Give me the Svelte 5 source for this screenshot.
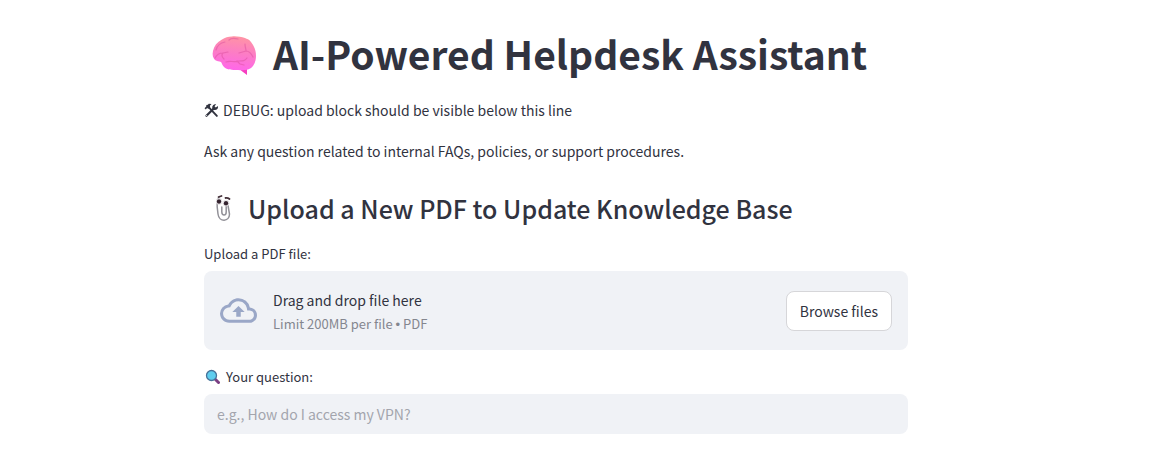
<script>
  let question = $state('');
  let picker;
</script>

<main>
  <h1>
    <svg class="brain" viewBox="0 -4 44 43" aria-hidden="true">
      <defs>
        <linearGradient id="brain-fill" x1="0.6" y1="0" x2="0.45" y2="1">
          <stop offset="0" stop-color="#ff94a4" />
          <stop offset="0.5" stop-color="#fc7cc6" />
          <stop offset="1" stop-color="#ff66ea" />
        </linearGradient>
      </defs>
      <path d="M27 31l6 2 2-1v7l-4-3c-2-1-3-3-4-5z" fill="#f63fc0" />
      <path d="M20 0.500c-4 0-7 1-10 3C5 6 2 10 1 15c-1 4 0 7 2 9 2 1.500 4 1 6 2 1 1 1 3 3 5 3 3 8 3 14 3 7 1 12 0 15-4 2-3 3-6 3-10 0-6-2-10-5-14-2-3-4-3-6-4C29 1 24 0 20 .5z" fill="url(#brain-fill)" />
      <g fill="none" stroke="#dd509f" stroke-width="1.200" stroke-linecap="round" stroke-linejoin="round" opacity="0.5">
        <path d="M4 14c1-4 4-7 9-8M17 4c2-2 5-2 9-1" />
        <path d="M3 22c2-4 5-5 8-5l5-1M11 17c-2 2-1 4 1 6" />
        <path d="M33 8c0 3 1 5 1 7l-7 2M34 15c3 0 5 2 7 6" />
        <path d="M14 26c5-2 8 1 13-1 4 0 6 0 8-3M25 25l3 3 4 1" />
      </g>
    </svg>
    <span>AI-Powered Helpdesk Assistant</span>
  </h1>

  <p>
    <svg class="tools" viewBox="0 0 14 14" aria-hidden="true">
      <path d="M3 2.500l9 9.500" stroke="#31333f" stroke-width="1.800" stroke-linecap="round" />
      <path d="M0.500 5L4.500 0.800 7 1 5.500 2.500 5.800 4 3.800 5.600 3 4.500 1.700 6z" fill="#31333f" />
      <path d="M9.300 5L2.300 12" stroke="#31333f" stroke-width="2" stroke-linecap="round" />
      <path d="M8 5.500c-1-2.500.8-4.700 3.400-4.300L9.800 3l1.200 1.300L13 2.700c.6 2.600-1.500 4.500-4 3.700z" fill="#31333f" />
      <circle cx="2.500" cy="11.700" r="0.500" fill="#fff" />
    </svg>
    <span>DEBUG: upload block should be visible below this line</span>
  </p>
  <p>Ask any question related to internal FAQs, policies, or support procedures.</p>

  <h2>
    <svg class="clip" viewBox="0 0 16 30" aria-hidden="true">
      <path d="M3 4.500C1 7 1 9 1.200 14L2 21c1 8.500 11.500 8 11.500 0L12 12.500M5.800 14v5c.2 4 4.400 4 4.400 0V13" fill="none" stroke="#929198" stroke-width="1.500" stroke-linecap="round" />
      <circle cx="3" cy="8.500" r="3" fill="#fff" stroke="#cbc5ca" stroke-width="0.500" />
      <circle cx="10" cy="10.200" r="3" fill="#fff" stroke="#cbc5ca" stroke-width="0.500" />
      <circle cx="3" cy="8.500" r="2.200" fill="#34232e" />
      <circle cx="10" cy="10.200" r="2.200" fill="#34232e" />
      <path d="M2.500 4l3-1M9.500 5c2-.2 3 .2 4 1" fill="none" stroke="#443039" stroke-width="1.800" stroke-linecap="round" />
    </svg>
    <span>Upload a New PDF to Update Knowledge Base</span>
  </h2>

  <label class="caption" for="pdf">Upload a PDF file:</label>
  <section class="dropzone">
    <svg class="cloud" viewBox="0 0 24 24" aria-hidden="true">
      <path fill="#9aa7c7" d="M19.350 10.040A7.490 7.490 0 0012 4C9.110 4 6.600 5.640 5.350 8.040A5.994 5.994 0 000 14c0 3.310 2.690 6 6 6h13c2.760 0 5-2.240 5-5 0-2.640-2.050-4.780-4.650-4.960zM19 18H6c-2.210 0-4-1.790-4-4 0-2.050 1.530-3.760 3.560-3.970l1.070-.11.5-.95A5.469 5.469 0 0112 6c2.620 0 4.880 1.860 5.390 4.430l.3 1.500 1.530.11A2.980 2.980 0 0122 15c0 1.650-1.350 3-3 3zM8 13h2.550v3h2.900v-3H16l-4-4-4 4z" />
    </svg>
    <div class="hint">
      <span>Drag and drop file here</span>
      <small>Limit 200MB per file <span class="dot">•</span> PDF</small>
    </div>
    <input id="pdf" type="file" accept=".pdf" hidden bind:this={picker} />
    <button type="button" onclick={() => picker.click()}>Browse files</button>
  </section>

  <label class="caption" for="question">
    <svg class="lens" viewBox="-1 0 16 16" aria-hidden="true">
      <path d="M10.500 10.500l3 3" stroke="#7b3f83" stroke-width="3" stroke-linecap="round" />
      <circle cx="6.500" cy="6.500" r="5" fill="#5fcdee" stroke="#467299" stroke-width="1.300" />
    </svg>
    <span>Your question:</span>
  </label>
  <input id="question" class="question" type="text" placeholder="e.g., How do I access my VPN?" bind:value={question} />
</main>

<style>
  :global(body) {
    margin: 0;
    background: #fff;
  }

  :global(#app) {
    padding-right: 40px;
  }

  main {
    box-sizing: border-box;
    max-width: 736px;
    margin: 0 auto;
    padding: 27px 16px 36px;
    color: #31333f;
    font: 14px/24px 'Noto Sans CJK SC', 'Open Sans', sans-serif;
  }

  svg {
    flex: none;
  }

  h1,
  h2,
  p {
    display: flex;
    align-items: center;
    margin: 0;
  }

  h1 {
    gap: 17px;
    padding-left: 8px;
    margin-bottom: 18px;
    font-size: 39px;
    font-weight: 700;
    line-height: 53px;
  }

  p {
    gap: 4px;
    margin-bottom: 17px;
  }

  h2 {
    gap: 16px;
    padding-left: 12px;
    margin: 28px 0 19px;
    font-size: 25px;
    font-weight: 500;
    line-height: 34px;
  }

  .brain {
    width: 44px;
    height: 43px;
  }

  .tools {
    width: 15px;
    height: 15px;
  }

  .clip {
    width: 16px;
    height: 30px;
  }

  .cloud {
    width: 37px;
    height: 37px;
  }

  .lens {
    width: 16px;
    height: 16px;
  }

  .caption {
    display: flex;
    align-items: center;
    gap: 6px;
    margin-bottom: 7px;
    font-size: 13px;
    line-height: 20px;
  }

  .dropzone {
    display: flex;
    align-items: center;
    gap: 16px;
    margin-bottom: 17px;
    padding: 14px 16px;
    border-radius: 8px;
    background: #f0f2f6;
  }

  .hint {
    display: flex;
    flex: 1;
    flex-direction: column;
    padding-top: 3px;
  }

  small {
    color: #84868f;
    font-size: 13px;
  }

  .dot {
    font-family: 'Liberation Sans', sans-serif;
    line-height: 1;
  }

  button {
    height: 40px;
    padding: 0 13px;
    border: 1px solid #d6d6d9;
    border-radius: 8px;
    background: #fff;
    color: inherit;
    font: inherit;
    cursor: pointer;
  }

  .question {
    box-sizing: border-box;
    width: 100%;
    height: 40px;
    padding: 0 13px;
    border: 0;
    border-radius: 8px;
    background: #f0f2f6;
    color: inherit;
    font: inherit;
  }

  .question::placeholder {
    color: #a3a5ad;
    opacity: 1;
  }
</style>
